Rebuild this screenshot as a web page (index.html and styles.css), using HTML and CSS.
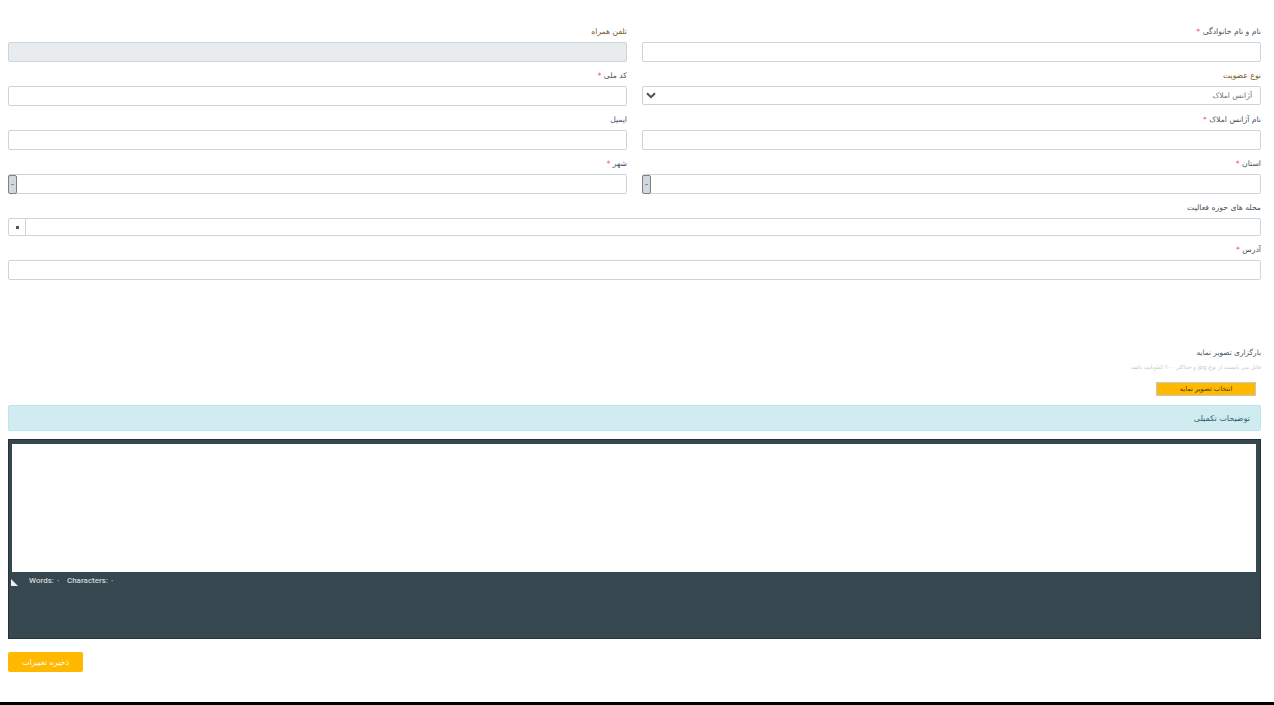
FILE: index.html
```html
<!DOCTYPE html>
<html lang="fa" dir="rtl">

<head>
    <meta charset="UTF-8">
    <meta name="viewport" content="width=device-width, initial-scale=1.0">
    <title>ویرایش پروفایل</title>
    <link rel="stylesheet" href="styles.css">
</head>

<body>
    <form class="profile-form">
        <div class="form-grid">
            <div class="field">
                <label class="field-label">نام و نام خانوادگی <span class="required">*</span></label>
                <input class="text-input" type="text">
            </div>
            <div class="field">
                <label class="field-label label-warm">تلفن همراه</label>
                <input class="text-input" type="text" disabled>
            </div>

            <div class="field">
                <label class="field-label label-warm">نوع عضویت</label>
                <div class="select-wrap">
                    <select class="select-input">
                        <option>آژانس املاک</option>
                    </select>
                    <svg class="select-arrow" width="10" height="7" viewBox="0 0 10 7">
                        <path d="M1 1.2 L5 5.2 L9 1.2" fill="none" stroke="#4a4f55" stroke-width="2" />
                    </svg>
                </div>
            </div>
            <div class="field">
                <label class="field-label">کد ملی <span class="required">*</span></label>
                <input class="text-input" type="text">
            </div>

            <div class="field">
                <label class="field-label">نام آژانس املاک <span class="required">*</span></label>
                <input class="text-input" type="text">
            </div>
            <div class="field">
                <label class="field-label label-blue">ایمیل</label>
                <input class="text-input" type="text">
            </div>

            <div class="field">
                <label class="field-label">استان <span class="required">*</span></label>
                <div class="combo">
                    <span class="combo-text"></span>
                    <span class="combo-btn"><i class="combo-caret"></i></span>
                </div>
            </div>
            <div class="field">
                <label class="field-label label-blue">شهر <span class="required">*</span></label>
                <div class="combo">
                    <span class="combo-text"></span>
                    <span class="combo-btn"><i class="combo-caret"></i></span>
                </div>
            </div>

            <div class="field field-wide">
                <label class="field-label">محله های حوزه فعالیت</label>
                <div class="multi">
                    <span class="multi-text"></span>
                    <span class="multi-btn"><i class="multi-caret"></i></span>
                </div>
            </div>

            <div class="field field-wide">
                <label class="field-label">آدرس <span class="required">*</span></label>
                <input class="text-input" type="text">
            </div>
        </div>

        <div class="upload">
            <div class="upload-title">بارگزاری تصویر نمایه</div>
            <div class="upload-hint">فایل می بایست از نوع jpg و حداکثر ۲۰۰ کیلوبایت باشد</div>
            <button type="button" class="upload-button">انتخاب تصویر نمایه</button>
        </div>

        <div class="alert-info">توضیحات تکمیلی</div>

        <div class="editor">
            <div class="editor-body"></div>
            <div class="editor-status" dir="ltr">
                <i class="resize-grip"></i>
                <span class="status-item">Words: ۰</span>
                <span class="status-item">Characters: ۰</span>
            </div>
        </div>

        <div class="form-actions">
            <button type="button" class="save-button">ذخیره تغییرات</button>
        </div>
    </form>

    <div class="bottom-bar"></div>
</body>

</html>
```

FILE: styles.css
```css
* {
    box-sizing: border-box;
}

html,
body {
    margin: 0;
    padding: 0;
}

body {
    font-family: "DejaVu Sans", Roboto, sans-serif;
    background-color: white;
    color: #495057;
}

.profile-form {
    padding: 24px 13px 30px 8px;
}

.form-grid {
    display: grid;
    grid-template-columns: 619px 619px;
    column-gap: 15px;
    row-gap: 6px;
}

.field-wide {
    grid-column: 1 / -1;
}

.field-label {
    display: block;
    height: 18px;
    line-height: 15px;
    font-size: 7.7px;
    color: #4a5560;
}

.label-warm {
    color: #7a5a2a;
}

.label-blue {
    color: #46557a;
}

.required {
    color: #f0525f;
}

.text-input {
    display: block;
    width: 100%;
    height: 20px;
    border: 1px solid #ced4da;
    border-radius: 2px;
    background-color: white;
}

.text-input:disabled {
    background-color: #e9ecef;
}

.select-wrap {
    position: relative;
}

.select-input {
    display: block;
    width: 100%;
    height: 19px;
    padding: 0 8px;
    border: 1px solid #ced4da;
    border-radius: 2px;
    background-color: white;
    font-family: inherit;
    font-size: 7.6px;
    color: #6c757d;
    appearance: none;
}

.select-arrow {
    position: absolute;
    left: 4px;
    top: 6px;
}

.combo {
    display: flex;
    height: 20px;
    border: 1px solid #ced4da;
    border-radius: 2px;
    background-color: white;
}

.combo-text {
    flex: 1;
}

.combo-btn {
    display: flex;
    align-items: center;
    justify-content: center;
    width: 9px;
    margin: 0 0 -1px -1px;
    background-color: #d3d7de;
    border: 1px solid #7c7f85;
    border-radius: 2px;
}

.combo-caret {
    width: 3px;
    height: 1px;
    background-color: #888;
}

.multi {
    display: flex;
    height: 18px;
    border: 1px solid #ced4da;
    border-radius: 2px;
    background-color: white;
}

.multi-text {
    flex: 1;
}

.multi-btn {
    display: flex;
    align-items: center;
    justify-content: center;
    width: 17px;
    border-right: 1px solid #ced4da;
}

.multi-caret {
    width: 3px;
    height: 3px;
    background-color: #555;
}

.upload {
    margin-top: 65px;
}

.upload-title {
    height: 15px;
    line-height: 15px;
    font-size: 7.4px;
    color: #4a5560;
}

.upload-hint {
    height: 14px;
    line-height: 14px;
    font-size: 5.65px;
    color: #c6cace;
}

.upload-button {
    display: block;
    width: 100px;
    height: 14px;
    margin: 8px 5px 0 0;
    padding: 0;
    border: 1px solid #c8c8c8;
    background-color: #ffb900;
    font-family: inherit;
    font-size: 6.7px;
    color: #4a3a00;
}

.alert-info {
    height: 26px;
    margin-top: 9px;
    padding: 0 10px;
    line-height: 25px;
    border: 1px solid #bee5eb;
    border-radius: 2px;
    background-color: #d1ecf1;
    font-size: 8px;
    color: #2f5f68;
}

.editor {
    height: 200px;
    margin-top: 8px;
    padding: 4px 4px 0 3px;
    border: 1px solid #263238;
    background-color: #37474f;
}

.editor-body {
    height: 128px;
    background-color: white;
}

.editor-status {
    display: flex;
    gap: 7px;
    height: 16px;
    padding-left: 17px;
    position: relative;
    line-height: 17px;
    font-family: Roboto, sans-serif;
    font-size: 8px;
    font-weight: 500;
    color: #cfd8dc;
}

.resize-grip {
    position: absolute;
    left: -1px;
    top: 7px;
    border-left: 7px solid #eceff1;
    border-top: 7px solid transparent;
}

.form-actions {
    display: flex;
    justify-content: flex-end;
    margin-top: 13px;
}

.save-button {
    width: 75px;
    height: 20px;
    padding: 0;
    border: 0;
    border-radius: 2px;
    background-color: #ffb900;
    font-family: inherit;
    font-size: 8px;
    color: white;
}

.bottom-bar {
    height: 3px;
    background-color: black;
}
```
